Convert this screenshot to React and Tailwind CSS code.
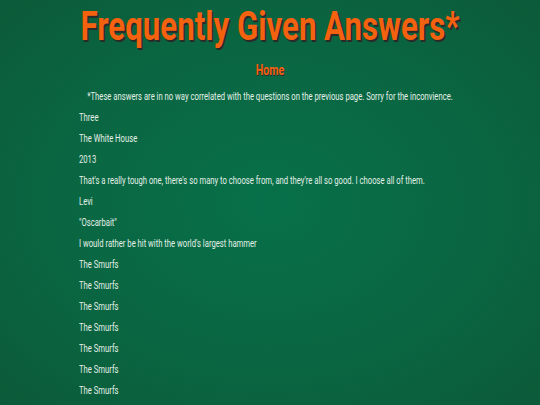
const answers = [
  "Three",
  "The White House",
  "2013",
  "That's a really tough one, there's so many to choose from, and they're all so good. I choose all of them.",
  "Levi",
  "\"Oscarbait\"",
  "I would rather be hit with the world's largest hammer",
  "The Smurfs",
  "The Smurfs",
  "The Smurfs",
  "The Smurfs",
  "The Smurfs",
  "The Smurfs",
  "The Smurfs",
]

export default function App() {
  return (
    <div
      className="h-screen w-full overflow-hidden bg-[radial-gradient(ellipse_at_center,#077049_0%,#0a6541_60%,#0c5a39_100%)] text-[#e3f0e7]"
      style={{ fontFamily: 'Roboto, "Liberation Sans", sans-serif' }}
    >
      <h1 className="pt-[4px] text-center text-[40px] leading-[46px] font-bold whitespace-nowrap text-[#f5620f] [text-shadow:2px_2px_0_#2a2a2a] scale-x-[0.78]">
        Frequently Given Answers*
      </h1>
      <div className="mt-[12px] text-center leading-[16px] scale-x-[0.76]">
        <a className="text-[14px] font-bold text-[#f5620f] [text-shadow:1px_1px_0_#2a2a2a]">Home</a>
      </div>
      <p className="mt-[12px] text-center text-[10.5px] leading-[13px] whitespace-nowrap scale-x-[0.73]">
        *These answers are in no way correlated with the questions on the previous page. Sorry for the inconvience.
      </p>
      <div className="mt-[8px] flex flex-col gap-[8px] pl-[79px]">
        {answers.map((a, i) => (
          <p key={i} className="origin-left text-[10.5px] leading-[13px] whitespace-nowrap scale-x-[0.73]">
            {a}
          </p>
        ))}
      </div>
    </div>
  )
}
